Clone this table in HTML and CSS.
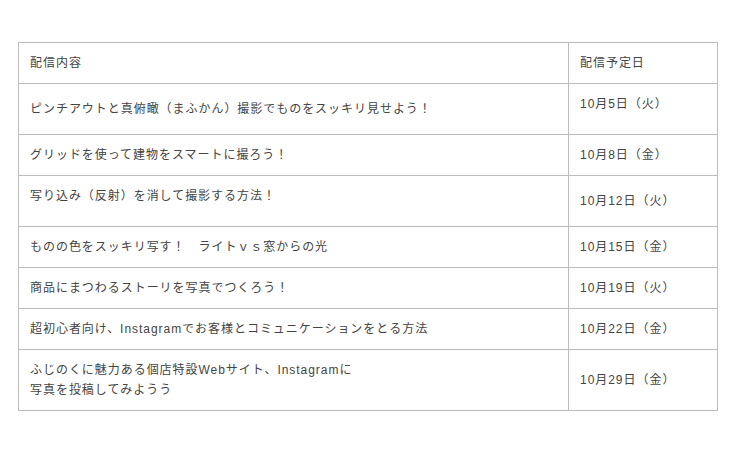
FILE: index.html
```html
<!DOCTYPE html>
<html lang="ja">
<head>
<meta charset="utf-8">
<link rel="stylesheet" href="styles.css">
</head>
<body>
<div class="page">
  <table class="schedule">
    <thead>
      <tr>
        <th class="col-title">配信内容</th>
        <th class="col-date">配信予定日</th>
      </tr>
    </thead>
    <tbody>
      <tr>
        <td>ピンチアウトと真俯瞰（まふかん）撮影でものをスッキリ見せよう！</td>
        <td class="top pad-extra">10月5日（火）</td>
      </tr>
      <tr>
        <td>グリッドを使って建物をスマートに撮ろう！</td>
        <td>10月8日（金）</td>
      </tr>
      <tr>
        <td class="top pad-extra">写り込み（反射）を消して撮影する方法！</td>
        <td>10月12日（火）</td>
      </tr>
      <tr>
        <td>ものの色をスッキリ写す！　ライトｖｓ窓からの光</td>
        <td>10月15日（金）</td>
      </tr>
      <tr>
        <td>商品にまつわるストーリを写真でつくろう！</td>
        <td>10月19日（火）</td>
      </tr>
      <tr>
        <td>超初心者向け、Instagramでお客様とコミュニケーションをとる方法</td>
        <td>10月22日（金）</td>
      </tr>
      <tr>
        <td>ふじのくに魅力ある個店特設Webサイト、Instagramに<br>写真を投稿してみようう</td>
        <td>10月29日（金）</td>
      </tr>
    </tbody>
  </table>
</div>
</body>
</html>
```
FILE: styles.css
```css
html, body {
  margin: 0;
  padding: 0;
  background: #fff;
}
.page {
  padding: 42px 22px 0 18px;
}
.schedule {
  width: 700px;
  border-collapse: collapse;
  font-family: "Liberation Sans", "Noto Sans CJK JP", sans-serif;
  font-size: 12px;
  line-height: 20px;
  letter-spacing: 0.08em;
  color: #444;
}
.schedule th,
.schedule td {
  border: 1px solid #bcbcbc;
  padding: 10px 11px;
  text-align: left;
  font-weight: normal;
  vertical-align: middle;
}
.col-title {
  width: 527px;
}
.schedule td.top {
  vertical-align: top;
}
.schedule td.pad-extra {
  padding-bottom: 20px;
}
```
